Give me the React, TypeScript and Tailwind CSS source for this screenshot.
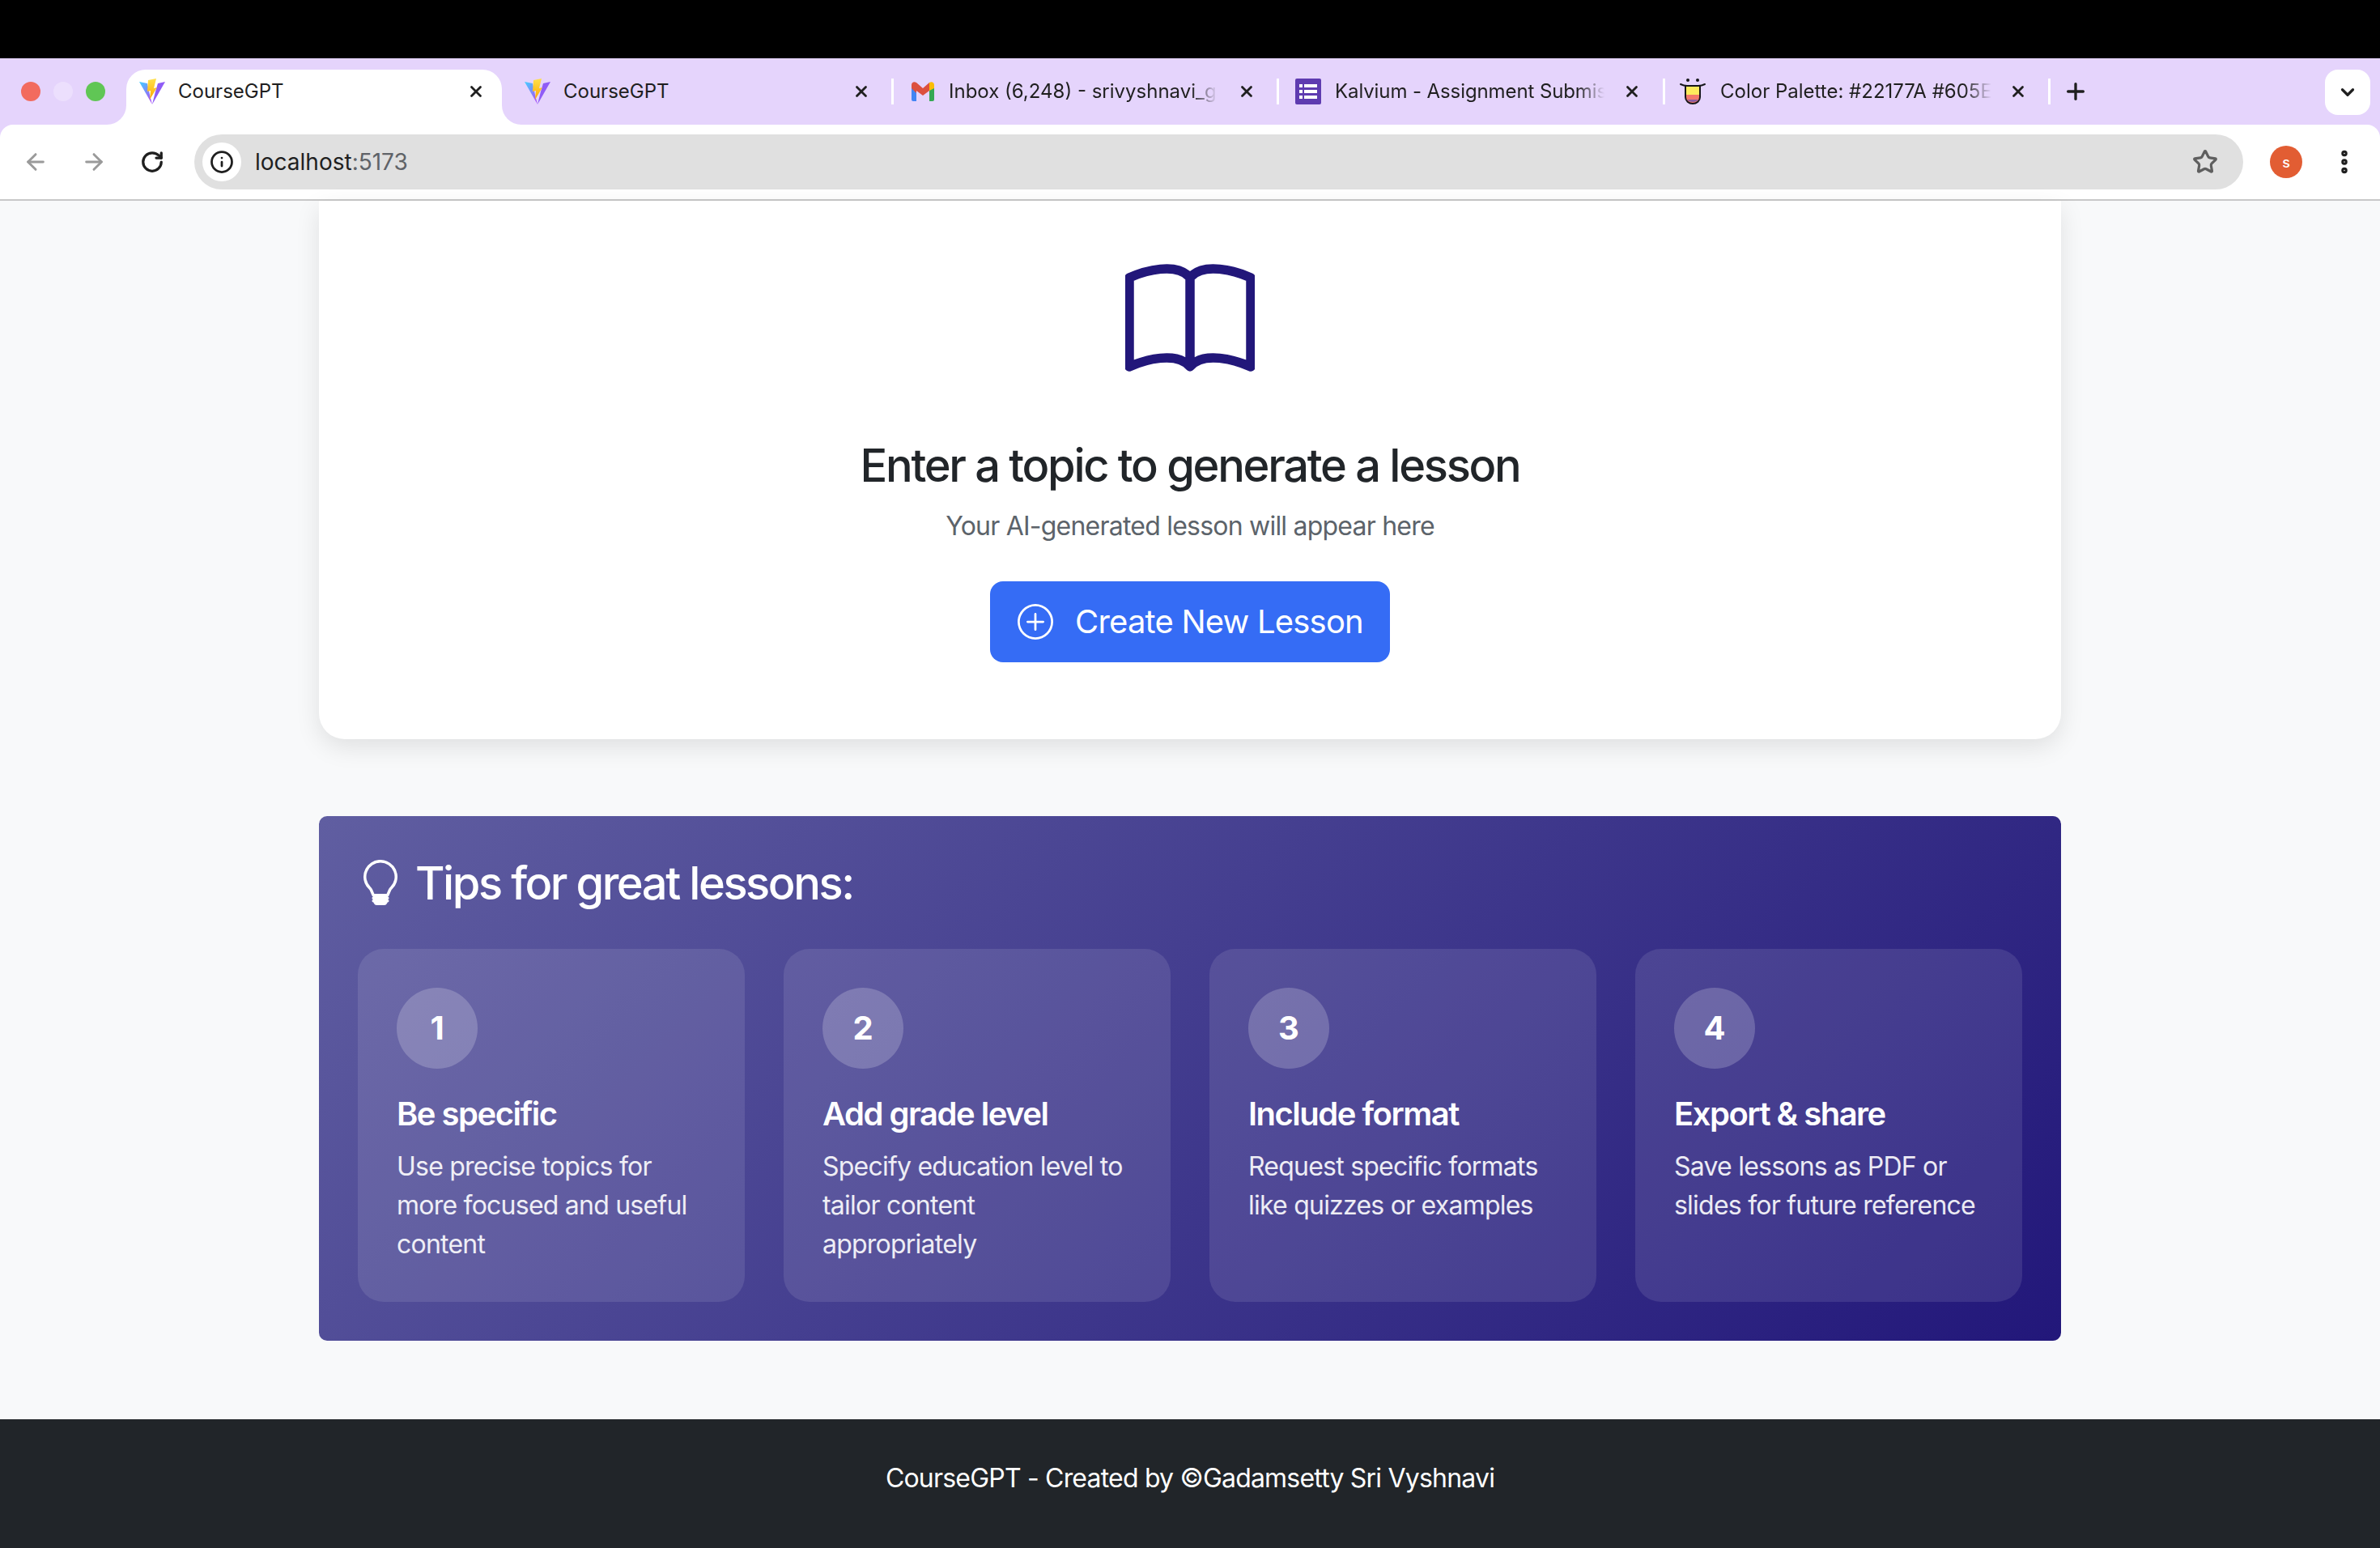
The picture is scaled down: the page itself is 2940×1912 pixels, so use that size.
import { BsBook, BsLightbulb, BsPlusCircle } from "react-icons/bs";
import { ArrowLeft, ArrowRight, ChevronDown, EllipsisVertical, Info, Plus, RotateCw, Star, X } from "lucide-react";
import type { ReactNode } from "react";

const TIPS = [
  { n: "1", title: "Be specific", lines: ["Use precise topics for", "more focused and useful", "content"] },
  { n: "2", title: "Add grade level", lines: ["Specify education level to", "tailor content", "appropriately"] },
  { n: "3", title: "Include format", lines: ["Request specific formats", "like quizzes or examples"] },
  { n: "4", title: "Export & share", lines: ["Save lessons as PDF or", "slides for future reference"] },
];

function ViteIcon() {
  return (
    <svg viewBox="0 0 32 32" className="h-8 w-8 shrink-0">
      <defs>
        <linearGradient id="vite-body" x1="0" y1="0" x2="0.6" y2="1">
          <stop offset="0" stopColor="#41d1ff" />
          <stop offset="1" stopColor="#a855f7" />
        </linearGradient>
        <linearGradient id="vite-bolt" x1="0" y1="0" x2="0" y2="1">
          <stop offset="0" stopColor="#ffe14d" />
          <stop offset="1" stopColor="#ffa800" />
        </linearGradient>
      </defs>
      <path d="M0 4l10 2 3 14 3 12z" fill="url(#vite-body)" />
      <path d="M32 4l-9 2-3 10-4 16z" fill="#8f5cf6" />
      <path d="M21 0l-10 2-1 14 4-1-1 11 9-15-4 1z" fill="url(#vite-bolt)" />
    </svg>
  );
}

function GmailIcon() {
  return (
    <svg viewBox="0 0 28 24" className="h-6 w-7 shrink-0">
      <path d="M0 4v18a2 2 0 0 0 2 2h4V11z" fill="#4285f4" />
      <path d="M28 4v18a2 2 0 0 1-2 2h-4V11z" fill="#34a853" />
      <path d="M0 4c0-3 3-5 6-3l8 7 8-7v10l-8 6-8-6v3L0 8z" fill="#dc4f3e" />
      <path d="M22 1c3-2 6 0 6 3v4l-6 3z" fill="#fbbc04" />
    </svg>
  );
}

function FormsIcon() {
  return (
    <svg viewBox="0 0 32 32" className="h-8 w-8 shrink-0">
      <rect width="32" height="32" rx="2" fill="#5e3bb0" />
      <rect x="5" y="7" width="4" height="4" fill="#fff" />
      <rect x="11" y="7" width="16" height="4" fill="#fff" />
      <rect x="5" y="14" width="4" height="4" fill="#fff" />
      <rect x="11" y="14" width="16" height="4" fill="#fff" />
      <rect x="5" y="21" width="4" height="4" fill="#fff" />
      <rect x="11" y="21" width="16" height="4" fill="#fff" />
    </svg>
  );
}

function PaletteIcon() {
  return (
    <svg viewBox="0 0 32 32" className="h-8 w-8 shrink-0">
      <path d="M7 9h18v14a9 8 0 0 1-18 0z" fill="#fdeb5c" />
      <path d="M7 20h18v3a9 8 0 0 1-18 0z" fill="#f2786b" />
      <path d="M9 26h14a9 8 0 0 1-14 0z" fill="#8d5d9f" />
      <path d="M7 9v14a9 8 0 0 0 18 0V9" fill="none" stroke="#16161a" strokeWidth="2" />
      <path d="M1 7c4 2 7 2 8 2h14c1 0 4 0 8-2" fill="none" stroke="#16161a" strokeWidth="2" strokeLinecap="round" />
      <circle cx="10" cy="2" r="2" fill="#16161a" />
      <circle cx="22" cy="2" r="2" fill="#16161a" />
    </svg>
  );
}

function Tab({ icon, label, className, textClass, active }: { icon: ReactNode; label: string; className: string; textClass: string; active?: boolean }) {
  return (
    <div className={`relative flex h-[68px] shrink-0 items-center pb-[14px] text-[24px] text-[#1f1f1f] ${active ? "rounded-t-[24px] bg-white" : ""} ${className}`}>
      {active && (
        <>
          <span className="absolute bottom-0 -left-[24px] h-6 w-6 bg-white"><span className="block h-6 w-6 rounded-br-[24px] bg-[#e5d4fc]" /></span>
          <span className="absolute bottom-0 -right-[24px] h-6 w-6 bg-white"><span className="block h-6 w-6 rounded-bl-[24px] bg-[#e5d4fc]" /></span>
        </>
      )}
      {icon}
      <span className={`overflow-hidden whitespace-nowrap ${textClass}`}>{label}</span>
      <X size={22} strokeWidth={3} className="ml-auto shrink-0 text-[#1f1f1f]" />
    </div>
  );
}

function Separator() {
  return <div className="mb-[14px] h-8 w-[3px] shrink-0 bg-white" />;
}

function BrowserChrome() {
  return (
    <div className="shrink-0 bg-[#e5d4fc]">
      <div className="h-[72px] bg-black" />
      <div className="flex h-[82px] items-end">
        <div className="flex h-[68px] w-[156px] shrink-0 items-start gap-4 pt-[15px] pl-[26px]">
          <span className="h-6 w-6 rounded-full bg-[#f26b5e]" />
          <span className="h-6 w-6 rounded-full bg-[#ecdffd]" />
          <span className="h-6 w-6 rounded-full bg-[#60c655]" />
        </div>
        <div className="flex h-[68px] items-center">
          <Tab active className="w-[464px] pr-[21px] pl-4" textClass="ml-4 w-[340px]" icon={<ViteIcon />} label="CourseGPT" />
          <Tab className="w-[481px] pr-[26px] pl-7" textClass="ml-4 w-[340px]" icon={<ViteIcon />} label="CourseGPT" />
          <Separator />
          <Tab className="w-[473px] pr-[26px] pl-[22px]" textClass="ml-[18px] w-[332px] [mask-image:linear-gradient(to_right,black_90%,transparent)]" icon={<GmailIcon />} label="Inbox (6,248) - srivyshnavi_gadamsetty" />
          <Separator />
          <Tab className="w-[474px] pr-[27px] pl-5" textClass="ml-[17px] w-[333px] tracking-[-0.1px] [mask-image:linear-gradient(to_right,black_90%,transparent)]" icon={<FormsIcon />} label="Kalvium - Assignment Submission" />
          <Separator />
          <Tab className="w-[473px] pr-[26px] pl-[18px]" textClass="ml-[18px] w-[335px] [mask-image:linear-gradient(to_right,black_90%,transparent)]" icon={<PaletteIcon />} label="Color Palette: #22177A #605EA1" />
          <Separator />
          <Plus size={32} strokeWidth={2.5} className="mb-[14px] ml-[15px] shrink-0 text-[#1f1f1f]" />
        </div>
        <div className="mr-3 mb-3 ml-auto flex h-14 w-14 items-center justify-center rounded-[16px] bg-white">
          <ChevronDown size={26} strokeWidth={3} className="text-[#1f1f1f]" />
        </div>
      </div>
      <div className="flex h-[92px] items-center rounded-t-[16px] bg-white">
        <div className="flex w-[240px] shrink-0 items-center">
          <ArrowLeft size={32} strokeWidth={2.2} className="ml-[28px] text-[#9a9a9a]" />
          <ArrowRight size={32} strokeWidth={2.2} className="ml-[40px] text-[#9a9a9a]" />
          <RotateCw size={30} strokeWidth={2.6} className="ml-[41px] text-[#1f1f1f]" />
        </div>
        <div className="flex h-[68px] w-[2531px] shrink-0 items-center rounded-full bg-[#e0e0e0] pl-[10px]">
          <div className="flex h-12 w-12 items-center justify-center rounded-full bg-white">
            <Info size={30} strokeWidth={2.2} className="text-[#1f1f1f]" />
          </div>
          <span className="ml-[17px] text-[28px] text-[#1f1f1f]">localhost<span className="text-[#5f6368]">:5173</span></span>
          <Star size={32} strokeWidth={2.4} className="mr-[31px] ml-auto text-[#5f5f5f]" />
        </div>
        <div className="ml-[33px] flex h-10 w-10 shrink-0 items-center justify-center rounded-full bg-[#e25d33] text-[18px] font-medium text-white">s</div>
        <EllipsisVertical size={36} strokeWidth={3} className="ml-[34px] shrink-0 text-[#1f1f1f]" />
      </div>
      <div className="h-[2px] bg-[#c8c8c8]" />
    </div>
  );
}

function EmptyCard() {
  return (
    <div className="flex h-[665px] shrink-0 flex-col items-center rounded-b-[32px] bg-white pt-[70px] shadow-[0_10px_30px_rgba(0,0,0,0.1)]">
      <BsBook size={160} stroke="currentColor" strokeWidth={0.15} className="text-[#22177a]" />
      <h2 className="mt-[63px] text-[56px] leading-[68px] font-medium tracking-[-2.3px] text-[#212529]">Enter a topic to generate a lesson</h2>
      <p className="mt-[17px] text-[32px] leading-[48px] tracking-[-0.78px] text-[#5c636a]">Your AI-generated lesson will appear here</p>
      <button className="mt-[44px] flex h-[100px] w-[494px] items-center rounded-[16px] bg-[#356cf5] pl-[34px] text-[40px] tracking-[-0.8px] whitespace-nowrap text-white">
        <BsPlusCircle size={44} />
        <span className="ml-[27px]">Create New Lesson</span>
      </button>
    </div>
  );
}

function TipCard({ n, title, lines }: { n: string; title: string; lines: string[] }) {
  return (
    <div className="rounded-[32px] bg-white/10 px-12 pt-12 pb-[47px] text-white">
      <div className="flex h-[100px] w-[100px] items-center justify-center rounded-full bg-white/20 text-[40px] font-bold">{n}</div>
      <h3 className="mt-[33px] text-[40px] leading-[46px] font-semibold tracking-[-1.5px]">{title}</h3>
      <p className="mt-[18px] text-[32px] leading-[48px] tracking-[-0.77px] whitespace-nowrap text-white/90">
        {lines.map((l) => (
          <span key={l} className="block">{l}</span>
        ))}
      </p>
    </div>
  );
}

function TipsPanel() {
  return (
    <div className="mt-[95px] h-[648px] shrink-0 rounded-[10px] bg-linear-[135deg,#605ea1,#22177a] px-12 pt-[43px] text-white">
      <div className="flex h-[80px] items-center">
        <BsLightbulb size={56} className="-mt-[2px] shrink-0" />
        <h2 className="ml-[15px] text-[56px] font-medium tracking-[-2.45px]">Tips for great lessons:</h2>
      </div>
      <div className="mt-[41px] grid grid-cols-4 gap-12">
        {TIPS.map((t) => (
          <TipCard key={t.n} {...t} />
        ))}
      </div>
    </div>
  );
}

export default function App() {
  return (
    <div className="flex h-[1912px] w-[2940px] flex-col overflow-hidden bg-[#f8f9fa] font-['Inter',sans-serif]">
      <BrowserChrome />
      <main className="flex flex-1 flex-col px-[394px]">
        <EmptyCard />
        <TipsPanel />
      </main>
      <footer className="flex h-[159px] shrink-0 items-start justify-center bg-[#212529] pt-[49px] text-[32px] leading-[48px] tracking-[-0.8px] text-white">
        CourseGPT - Created by ©Gadamsetty Sri Vyshnavi
      </footer>
    </div>
  );
}
